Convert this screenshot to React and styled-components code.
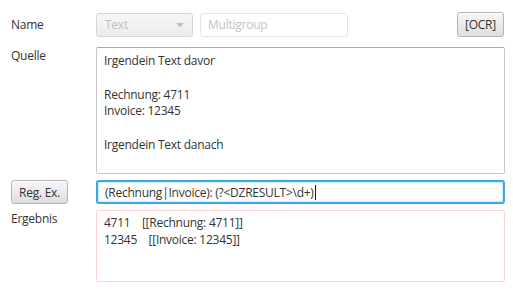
import React from "react";
import styled, { createGlobalStyle } from "styled-components";

const GlobalStyle = createGlobalStyle`
  html, body {
    margin: 0;
    padding: 0;
    background: #ffffff;
  }
  body {
    font-family: "Open Sans", "Noto Sans", sans-serif;
    font-size: 12px;
    letter-spacing: -0.25px;
    color: #333333;
  }
`;

const Form = styled.div`
  width: 513px;
  height: 291px;
  box-sizing: border-box;
  padding: 12px 8px 0 11px;
  display: grid;
  grid-template-columns: 85px 1fr;
  grid-template-rows: 25px 131px 24px 72px;
  row-gap: 6px;
`;

const Label = styled.div`
  line-height: 17px;
  align-self: ${(p) => (p.$center ? "center" : "start")};
  margin-top: ${(p) => p.$offset || 0}px;
  color: #333333;
`;

const TopRow = styled.div`
  display: flex;
  align-items: center;
  gap: 7px;
  margin-right: 1px;
`;

const Combo = styled.div`
  width: 97px;
  box-sizing: border-box;
  display: flex;
  align-items: center;
  justify-content: space-between;
  padding: 0 8px;
  border: 1px solid #d6d6d6;
  border-radius: 3px;
  background: linear-gradient(#f6f6f6, #ececec);
  color: #c2c2c2;
  height: 24px;
`;

const Arrow = styled.span`
  width: 0;
  height: 0;
  border-left: 4px solid transparent;
  border-right: 4px solid transparent;
  border-top: 4px solid #bdbdbd;
`;

const DisabledField = styled.div`
  width: 148px;
  box-sizing: border-box;
  height: 24px;
  display: flex;
  align-items: center;
  padding: 0 7px;
  border: 1px solid #e6e6e6;
  border-radius: 3px;
  color: #c4c4c4;
`;

const Spacer = styled.div`
  flex: 1;
`;

const Button = styled.button`
  font: inherit;
  letter-spacing: inherit;
  color: #333333;
  height: ${(p) => p.$h || 24}px;
  width: ${(p) => p.$w}px;
  padding: 0;
  border: 1px solid #b4b4b4;
  border-radius: 3px;
  background: linear-gradient(#f7f7f7, #dedede);
  box-shadow: inset 0 1px 0 #ffffff;
  cursor: default;
  align-self: ${(p) => p.$align || "auto"};
`;

const Area = styled.div`
  box-sizing: border-box;
  margin-top: ${(p) => p.$offset || 0}px;
  border: 1px solid ${(p) => p.$border};
  border-top-color: ${(p) => p.$top || p.$border};
  border-radius: 2px;
  padding: ${(p) => p.$pad || "4px 7px"};
  line-height: 16.8px;
  white-space: pre;
  color: #333333;
  overflow: hidden;
`;

const Focused = styled.div`
  box-sizing: border-box;
  height: 24px;
  display: flex;
  align-items: center;
  padding: 0 7px;
  border: 2px solid #39a9e3;
  border-radius: 3px;
  box-shadow: inset 0 0 0 1px #d3ecf9;
  white-space: pre;
`;

const Caret = styled.span`
  display: inline-block;
  width: 1px;
  height: 15px;
  background: #222222;
  margin-left: 1px;
`;

const sourceText = `Irgendein Text davor

Rechnung: 4711
Invoice: 12345

Irgendein Text danach`;

const results = [
  ["4711", "[[Rechnung: 4711]]"],
  ["12345", "[[Invoice: 12345]]"],
];

export default function App() {
  return (
    <>
      <GlobalStyle />
      <Form>
        <Label $center>Name</Label>
        <TopRow>
          <Combo>
            <span>Text</span>
            <Arrow />
          </Combo>
          <DisabledField>Multigroup</DisabledField>
          <Spacer />
          <Button $w={47} $h={25}>[OCR]</Button>
        </TopRow>

        <Label $offset={4}>Quelle</Label>
        <Area $offset={4} $border="#c8c8c8" $top="#a9a9a9" $pad="5px 7px">
          {sourceText}
        </Area>

        <Button $w={57} $align="start">Reg. Ex.</Button>
        <Focused>
          (Rechnung|Invoice): (?&lt;DZRESULT&gt;\d+)
          <Caret />
        </Focused>

        <Label>Ergebnis</Label>
        <Area $border="#ffd2d2" $pad="4px 7px">
          {results.map(([v, m]) => `${v}    ${m}`).join("\n")}
        </Area>
      </Form>
    </>
  );
}
